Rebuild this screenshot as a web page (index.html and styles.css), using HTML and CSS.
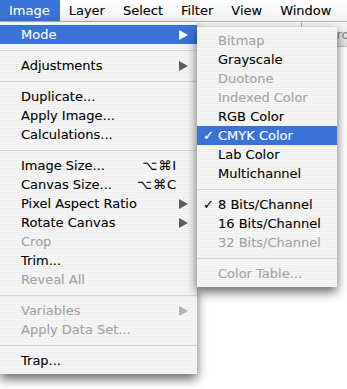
FILE: index.html
```html
<!DOCTYPE html>
<html lang="en">
<head>
  <meta charset="UTF-8" />
  <title>Image menu</title>
  <link rel="stylesheet" href="styles.css">
</head>
<body>

  <div class="menubar">
    <span class="title open">Image</span>
    <span class="title">Layer</span>
    <span class="title">Select</span>
    <span class="title">Filter</span>
    <span class="title">View</span>
    <span class="title">Window</span>
  </div>

  <div class="desk">
    <div class="optionsbar">
      <span class="divider"></span>
      <span class="front">Front</span>
    </div>

    <ul class="menu main">
      <li class="item selected"><span class="check"></span><span class="label">Mode</span><span class="arrow"></span></li>
      <li class="sep"></li>
      <li class="item"><span class="check"></span><span class="label">Adjustments</span><span class="arrow"></span></li>
      <li class="sep"></li>
      <li class="item"><span class="check"></span><span class="label">Duplicate...</span></li>
      <li class="item"><span class="check"></span><span class="label">Apply Image...</span></li>
      <li class="item"><span class="check"></span><span class="label">Calculations...</span></li>
      <li class="sep"></li>
      <li class="item"><span class="check"></span><span class="label">Image Size...</span><span class="keys">⌥⌘I</span></li>
      <li class="item"><span class="check"></span><span class="label">Canvas Size...</span><span class="keys">⌥⌘C</span></li>
      <li class="item"><span class="check"></span><span class="label">Pixel Aspect Ratio</span><span class="arrow"></span></li>
      <li class="item"><span class="check"></span><span class="label">Rotate Canvas</span><span class="arrow"></span></li>
      <li class="item off"><span class="check"></span><span class="label">Crop</span></li>
      <li class="item"><span class="check"></span><span class="label">Trim...</span></li>
      <li class="item off"><span class="check"></span><span class="label">Reveal All</span></li>
      <li class="sep"></li>
      <li class="item off"><span class="check"></span><span class="label">Variables</span><span class="arrow"></span></li>
      <li class="item off"><span class="check"></span><span class="label">Apply Data Set...</span></li>
      <li class="sep"></li>
      <li class="item"><span class="check"></span><span class="label">Trap...</span></li>
    </ul>

    <ul class="menu sub">
      <li class="item off"><span class="check"></span><span class="label">Bitmap</span></li>
      <li class="item"><span class="check"></span><span class="label">Grayscale</span></li>
      <li class="item off"><span class="check"></span><span class="label">Duotone</span></li>
      <li class="item off"><span class="check"></span><span class="label">Indexed Color</span></li>
      <li class="item"><span class="check"></span><span class="label">RGB Color</span></li>
      <li class="item selected"><span class="check">✓</span><span class="label">CMYK Color</span></li>
      <li class="item"><span class="check"></span><span class="label">Lab Color</span></li>
      <li class="item"><span class="check"></span><span class="label">Multichannel</span></li>
      <li class="sep"></li>
      <li class="item"><span class="check">✓</span><span class="label">8 Bits/Channel</span></li>
      <li class="item"><span class="check"></span><span class="label">16 Bits/Channel</span></li>
      <li class="item off"><span class="check"></span><span class="label">32 Bits/Channel</span></li>
      <li class="sep"></li>
      <li class="item off"><span class="check"></span><span class="label">Color Table...</span></li>
    </ul>
  </div>

</body>
</html>
```

FILE: styles.css
```css
body {
  margin: 0;
  width: 347px;
  height: 389px;
  overflow: hidden;
  background: #ffffff;
  font-family: 'DejaVu Sans', sans-serif;
  font-size: 13px;
  color: #000000;
  -webkit-text-stroke: 0.1px;
}

/* top menu bar */
.menubar {
  display: flex;
  height: 21px;
  border-bottom: 1px solid #b8b8b8;
  background: linear-gradient(#ffffff, #f2f2f2);
}

.title {
  padding: 0 9px;
  line-height: 21px;
}

.title.open {
  padding: 0 10px 0 9px;
  background: #3a72d5;
  color: #ffffff;
}

/* what is behind the menus */
.desk {
  position: relative;
  height: 367px;
}

.optionsbar {
  height: 24px;
  display: flex;
  align-items: center;
  justify-content: flex-end;
  background: linear-gradient(#f4f4f4, #e2e2e2);
  border-bottom: 1px solid #c4c4c4;
  color: #8a8a8a;
}

.divider {
  width: 1px;
  height: 24px;
  background: #b0b0b0;
  margin-right: 28px;
}

.front {
  width: 17px;
  overflow: hidden;
  white-space: nowrap;
}

/* menus */
.menu {
  position: absolute;
  list-style: none;
  margin: 0;
  padding: 3px 0 4px;
  background: repeating-linear-gradient(#efefef 0 1px, #f7f7f7 1px 2px);
  box-shadow: 0 5px 10px rgba(0, 0, 0, 0.6);
}

.main {
  left: 0;
  top: 0;
  width: 197px;
  z-index: 1;
}

.sub {
  left: 197px;
  top: 5px;
  width: 140px;
  padding: 4px 0;
  z-index: 2;
}

.item {
  display: flex;
  align-items: center;
  height: 19px;
  padding: 0 9px 0 6px;
}

.check {
  width: 15px;
  flex: none;
  font-size: 13px;
  font-weight: bold;
}

.label {
  flex: 1;
  white-space: nowrap;
}

.keys {
  margin-right: 11px;
  letter-spacing: 1px;
}

.arrow {
  width: 0;
  height: 0;
  border-top: 5px solid transparent;
  border-bottom: 5px solid transparent;
  border-left: 9px solid #5e5e5e;
}

.selected {
  background: #3a72d5;
  color: #ffffff;
}

.selected .arrow {
  border-left-color: #ffffff;
}

.off {
  color: #a2a2a2;
}

.off .arrow {
  border-left-color: #b4b4b4;
}

.sep {
  height: 12px;
  display: flex;
  align-items: center;
}

.sep::before {
  content: "";
  flex: 1;
  height: 1px;
  background: #d6d6d6;
}
```
